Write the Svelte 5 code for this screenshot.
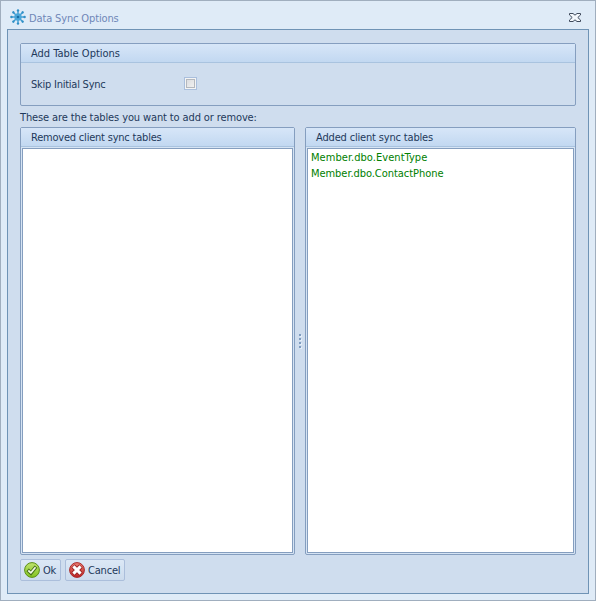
<script>
  const added = [
    { name: 'Member.dbo.EventType', spacing: 0.05 },
    { name: 'Member.dbo.ContactPhone', spacing: -0.05 }
  ];
  const spokes = [0, 45, 90, 135, 180, 225, 270, 315];
</script>

<div class="window">
  <header class="titlebar">
    <svg class="logo" width="16" height="16" viewBox="0 0 16 16">
      {#each spokes as angle}
        <g transform="rotate({angle} 8 8)">
          <path d="M8 7V1.5" stroke="#3b9bd0" stroke-width="1.4" />
          <circle cx="8" cy="1.4" r="1.2" fill="#2f8fc6" />
        </g>
      {/each}
      <circle cx="8" cy="8" r="3.7" fill="#4aa6d8" />
      <circle cx="8" cy="8" r="1.3" fill="#176fa8" />
    </svg>
    <span class="title">Data Sync Options</span>
    <svg class="close" width="12" height="9" viewBox="0 0 12 9">
      <path d="M.5 .5H4L6 2.2L8 .5H11.5V2L8.8 4.5L11.5 7V8.5H8L6 6.8L4 8.5H.5V7L3.2 4.5L.5 2Z" fill="#f4f8fc" stroke="#3f4a5c" stroke-width="1" />
    </svg>
  </header>

  <main class="body">
    <section class="group options">
      <h2><span>Add Table Options</span></h2>
      <div class="row">
        <span class="t-skip">Skip Initial Sync</span>
        <span class="check"><i></i></span>
      </div>
    </section>

    <p><span class="t-these">These are the tables you want to add or remove:</span></p>

    <div class="panels">
      <section class="group left">
        <h2><span class="t-removed">Removed client sync tables</span></h2>
        <div class="list"></div>
      </section>
      <div class="splitter"><i></i><i></i><i></i><i></i></div>
      <section class="group right">
        <h2><span class="t-added">Added client sync tables</span></h2>
        <div class="list">
          {#each added as table}
            <div class="item"><span style="letter-spacing: {table.spacing}px">{table.name}</span></div>
          {/each}
        </div>
      </section>
    </div>

    <footer>
      <button class="ok">
        <svg width="16" height="16" viewBox="0 0 16 16">
          <defs><linearGradient id="green" x2="0" y2="1"><stop stop-color="#c0e36e" /><stop offset="1" stop-color="#83c420" /></linearGradient></defs>
          <circle cx="8" cy="8" r="7.4" fill="url(#green)" stroke="#5b8f18" stroke-width="1" />
          <path d="M3.6 7.9L6.9 11L12 4.6" fill="none" stroke="#47721a" stroke-width="3.6" />
          <path d="M4.3 8.5L6.9 10.8L11.5 5.2" fill="none" stroke="#f4f9e8" stroke-width="1.7" />
        </svg>
        <span>Ok</span>
      </button>
      <button class="cancel">
        <svg width="16" height="16" viewBox="0 0 16 16">
          <defs><linearGradient id="red" x2="0" y2="1"><stop stop-color="#ee8276" /><stop offset="1" stop-color="#bd2323" /></linearGradient></defs>
          <circle cx="8" cy="8" r="7.4" fill="url(#red)" stroke="#a92b2b" stroke-width="1" />
          <path d="M4 4L12 12M12 4L4 12" stroke="#9a2323" stroke-width="4.8" />
          <path d="M4.4 4.4L11.6 11.6M11.6 4.4L4.4 11.6" stroke="#fff" stroke-width="3" />
        </svg>
        <span>Cancel</span>
      </button>
    </footer>
  </main>
</div>

<style>
  .window {
    box-sizing: border-box;
    width: 596px;
    height: 601px;
    display: flex;
    flex-direction: column;
    padding: 0 6px 6px;
    border: 1px solid #a0aebe;
    background: #dfebf7;
    color: #1e395b;
    font: 11px/14px "DejaVu Sans Condensed", "DejaVu Sans", sans-serif;
    font-stretch: condensed;
  }
  span { white-space: nowrap; }
  .titlebar { height: 28px; flex: none; display: flex; align-items: center; padding: 4px 8px 0 3px; box-sizing: border-box; }
  .title { margin-left: 3px; padding-top: 3px; color: #6f87b8; letter-spacing: -0.14px; }
  .close { margin: 1px 0 0 auto; }
  .body {
    flex: 1;
    box-sizing: border-box;
    display: flex;
    flex-direction: column;
    padding: 13px 12px 12px;
    border: 1px solid #6f93b5;
    background: #cfddee;
  }
  .group { box-sizing: border-box; border: 1px solid #859ebf; border-radius: 2px; display: flex; flex-direction: column; }
  h2 {
    flex: none;
    box-sizing: border-box;
    height: 19px;
    margin: 0;
    padding: 2px 10px 0;
    border-bottom: 1px solid #a9c3df;
    background: linear-gradient(#d7e6f8, #c2d8f1);
    font: inherit;
    line-height: 15px;
  }
  .options { height: 63px; flex: none; }
  .row { display: flex; align-items: flex-start; padding: 14px 0 0 10px; }
  .t-skip { width: 153px; padding-top: 1px; letter-spacing: -0.24px; }
  .t-these { letter-spacing: -0.12px; }
  .t-removed { letter-spacing: -0.21px; }
  .t-added { letter-spacing: -0.17px; }
  .check { box-sizing: border-box; width: 13px; height: 13px; border: 1px solid #aabfdd; background: #f4f4f4; padding: 1px; }
  .check i { display: block; box-sizing: border-box; width: 9px; height: 9px; border: 1px solid #b4b8be; background: linear-gradient(135deg, #dcdde0, #f0f0f0); }
  p { margin: 0; height: 21px; line-height: 24px; flex: none; }
  .panels { display: flex; height: 428px; flex: none; }
  .left { width: 275px; }
  .right { width: 271px; }
  .panels .group { background: #d6e4f4; padding: 0 1px 1px; }
  .panels h2 { margin: 0 -1px 1px; }
  .list { flex: 1; border: 1px solid #859ebf; background: #fff; padding-top: 1px; }
  .item { height: 16px; line-height: 16px; padding-left: 3px; color: #008000; }
  .splitter { width: 10px; display: flex; flex-direction: column; align-items: center; justify-content: center; gap: 2px; }
  .splitter i { width: 2px; height: 2px; background: #7f9cc0; box-shadow: 1px 1px #e4eef9; }
  footer { display: flex; gap: 4px; padding-top: 4px; }
  button {
    box-sizing: border-box;
    height: 22px;
    display: flex;
    align-items: center;
    gap: 3px;
    padding: 0 0 0 3px;
    border: 1px solid #abbedb;
    border-radius: 2px;
    background: linear-gradient(#dce8f6, #ccdbed);
    color: inherit;
    font: inherit;
  }
  button span { padding-top: 1px; letter-spacing: -0.2px; }
  .ok { width: 41px; }
  .cancel { width: 60px; }
</style>
